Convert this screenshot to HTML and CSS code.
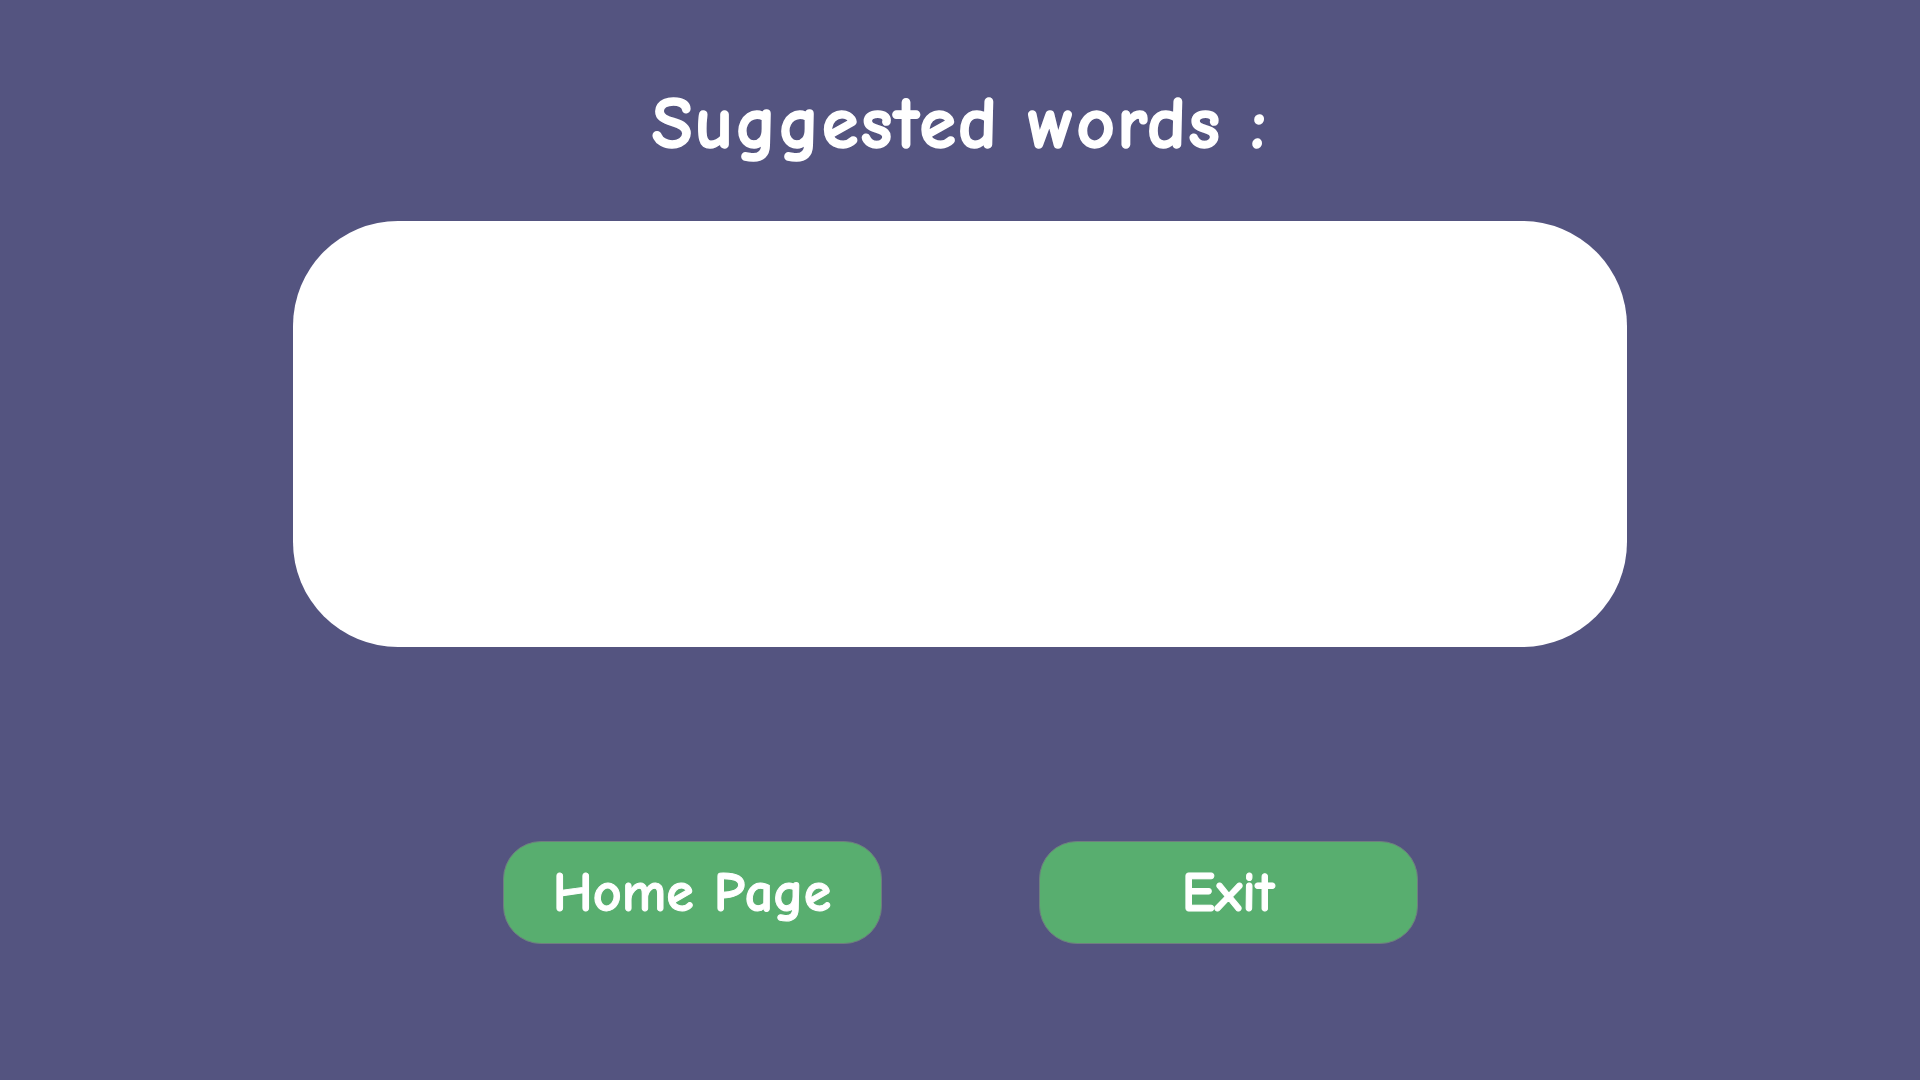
FILE: index.html
```html
<!DOCTYPE html>
<html lang="en">
<head>
<meta charset="utf-8">
<title>Suggested words</title>
<link rel="stylesheet" href="styles.css">
</head>
<body>
<main class="screen">
  <h1 class="title">Suggested words :</h1>
  <div class="words-box"></div>
  <div class="actions">
    <button class="btn">Home Page</button>
    <button class="btn">Exit</button>
  </div>
</main>
</body>
</html>
```

FILE: styles.css
```css
html, body {
  margin: 0;
  padding: 0;
  height: 100%;
}
body {
  background: #545480;
  font-family: "Comic Sans MS", "Comic Neue", "Open Sans", "DejaVu Sans", sans-serif;
  color: #ffffff;
}
.screen {
  display: flex;
  flex-direction: column;
  align-items: center;
  height: 1080px;
  box-sizing: border-box;
  padding-top: 70px;
}
.title {
  margin: 0;
  font-size: 75px;
  line-height: 108px;
  font-weight: 700;
  letter-spacing: 2px;
  -webkit-text-stroke: 1.5px #ffffff;
}
.words-box {
  margin-top: 43px;
  width: 1334px;
  height: 426px;
  background: #ffffff;
  border-radius: 105px;
}
.actions {
  display: flex;
  gap: 157px;
  margin-top: 194px;
}
.btn {
  width: 379px;
  height: 103px;
  border: 1px solid #6f7e80;
  border-radius: 38px;
  background: #58ae6f;
  color: #ffffff;
  font-family: inherit;
  font-size: 56px;
  font-weight: 700;
  padding: 0;
  -webkit-text-stroke: 1px #ffffff;
  cursor: pointer;
}
```
